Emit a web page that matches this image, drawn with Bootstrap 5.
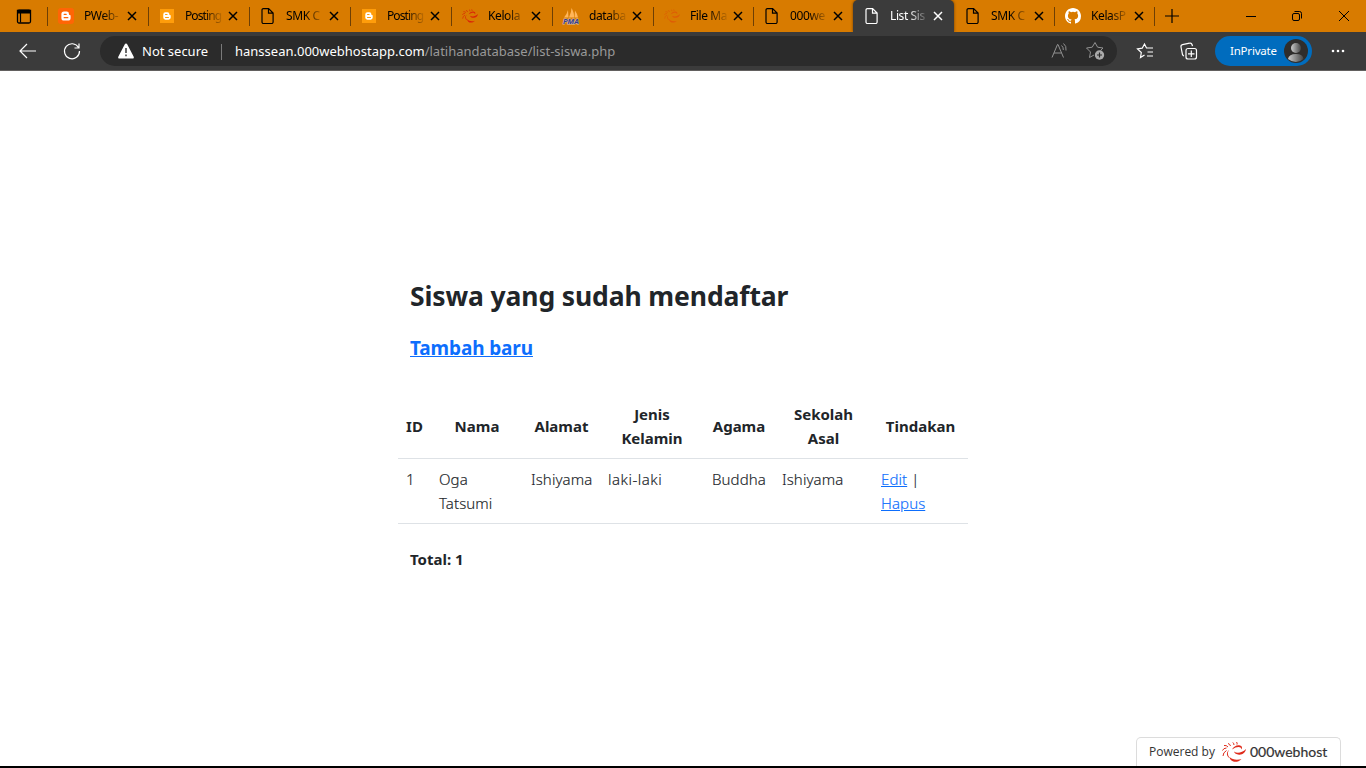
<!DOCTYPE html>
<html lang="id">
<head>
<meta charset="utf-8">
<title>List Siswa</title>
<link rel="stylesheet" href="https://cdn.jsdelivr.net/npm/bootstrap@5.3.0/dist/css/bootstrap.min.css">
<style>
body{width:1366px;height:768px;overflow:hidden;font-family:"Noto Sans","Open Sans",sans-serif;background:#fff}
svg{display:block;flex:none;overflow:visible}
.tabs{height:32px;background:#d87b00;color:#000;font-size:12px;flex:none}
.work{width:47px;padding-left:16px;flex:none}
.tb{width:101px;flex:none;padding:0 0 0 11px;height:32px;position:relative}
.tb:not(.on):not(.after)::before{content:"";position:absolute;left:0;top:7px;width:1px;height:19px;background:#6d3f05}
.tb.w100{width:100px}
.tb.plus{width:40px}
.tb.on{background:#3b3b3b;color:#fff;border-radius:5px 5px 0 0;box-shadow:0 0 3px #6b3d00}
.ttl{width:37px;margin-left:10px;overflow:hidden;white-space:nowrap;letter-spacing:-.4px;line-height:18px;-webkit-mask-image:linear-gradient(90deg,#000 50%,transparent 105%);mask-image:linear-gradient(90deg,#000 50%,transparent 105%)}
.ttl.tight{letter-spacing:-.9px}
.tb .x{margin-left:6px}
.bar{height:39px;background:#3b3b3b;border-bottom:1px solid #62605f;color:#fff;flex:none;position:relative;z-index:2}
.go{margin-left:19px}
.url{width:1017px;height:30px;background:#2b2b2b;border-radius:15px;font-size:13px;padding-left:18px;white-space:nowrap}
.url span{position:relative;top:.5px}
.sep{width:1px;height:16px;background:#7a7a7a;margin:0 13px 0 12px}
.secure{width:67px;margin-left:8px}
.path{color:#999}
.priv{width:97px;height:30px;border-radius:15px;background:#006cbe;font-size:11.5px;letter-spacing:-.2px;padding-left:15px;margin-left:18px}
.page-area{width:570px;margin-left:398px;padding-top:208px;color:#212529}
h1{font-size:26.5px;line-height:34px;font-weight:700;letter-spacing:-.12px;margin:0 0 23px 12px;white-space:nowrap}
.add{font-size:19px;line-height:24px;font-weight:700;letter-spacing:-.12px;margin:0 0 34px 12px}
a{color:#0d6efd}
.siswa{table-layout:fixed;width:570px;margin-bottom:23px;--bs-table-color:#212529}
.siswa th{font-size:15px;line-height:24px;text-align:center;vertical-align:middle;white-space:nowrap}
.siswa td{font-size:15px;line-height:24px;font-weight:350;letter-spacing:.08px;white-space:nowrap;-webkit-text-stroke:.15px currentColor}
.siswa .gender{letter-spacing:.5px}
.total{font-size:15px;line-height:24px;font-weight:700;margin-left:12px}
.edge{height:2px;background:#000;flex:none}
.host{width:205px;height:29px;margin-left:1136px;border:1px solid #dcdcdc;border-bottom:0;border-radius:5px 5px 0 0;font-size:12px;padding-left:12px;color:#333;font-family:"Open Sans",sans-serif;white-space:nowrap}
.host svg{margin:0 4px 0 7px}
.brand-name{font-size:14px;line-height:18px;font-family:Lato,sans-serif;margin-bottom:1px;-webkit-text-stroke:.2px #333}
</style>
<script src="https://cdn.jsdelivr.net/npm/bootstrap@5.3.0/dist/js/bootstrap.bundle.min.js"></script>
</head>
<body class="d-flex flex-column">
<svg width="0" height="0" class="position-absolute">
<defs>
<symbol id="x" viewBox="0 0 10 10"><path d="M1 1l8 8M9 1L1 9" stroke="currentColor" stroke-width="1.5"/></symbol>
<symbol id="doc" viewBox="0 0 16 16"><path d="M3.400.6h5.200l4.500 4.500v9a1.400 1.400 0 0 1-1.400 1.400H3.400A1.400 1.400 0 0 1 2 14.100V2A1.400 1.400 0 0 1 3.400.6zM8.500.7v4.500h4.500" fill="none" stroke="currentColor" stroke-width="1.200"/></symbol>
<symbol id="blog" viewBox="0 0 16 16"><path d="M6 3.500h2.600A2.400 2.400 0 0 1 11 5.900c0 .8.300 1 .9 1 .5 0 .7.300.7.800v2.200a2.600 2.600 0 0 1-2.600 2.600H6a2.600 2.600 0 0 1-2.600-2.600V6.100A2.600 2.600 0 0 1 6 3.500z" fill="#fff"/></symbol>
<symbol id="swirl" viewBox="0 0 24 20"><g fill="currentColor"><path d="M12 9.500c3 2.200 8 1.500 12-2.500-.5 3.500-3.500 6-7 5.700-2.800-.2-4.500-1.500-5-3.200z"/><path d="M7.500 15c3 2.800 7.500 3.500 12 2-3 3.300-7.500 3.700-10 1.500-1.200-1-1.800-2-2-3.500z"/><path d="M7 8c-1.800 2.500-1.500 5.500.8 8C4.500 14.800 3.800 10.500 7 8z"/><path d="M10 7.500c1.500-3 5-4.800 8-4 2 .5 2.600 2 1.500 4-.2-1.700-1.300-2.500-3-2.500-2 0-4 .8-6.500 2.500z"/></g><g fill="none" stroke="currentColor" stroke-width="1"><path d="M4.500 8.500Q1 10.500 1 14M4.500 6Q1.500 6 .5 8.500M6 5Q4.500 3 2 3.500M8.500 4Q8 2 6 1.500M12 3Q12 1 10.500.2M15 2.500Q15.500 1 14.500 0"/></g></symbol>
</defs></svg>

<header class="tabs d-flex align-items-center">
<div class="work"><svg width="16" height="16"><path d="M1.500 2.500h13v11a1.500 1.500 0 0 1-1.500 1.500H3a1.500 1.500 0 0 1-1.500-1.500z" fill="none" stroke="#000" stroke-width="1.300"/><path d="M1 3.500a2 2 0 0 1 2-2h10a2 2 0 0 1 2 2V5.500H1z" fill="#000"/><path d="M4.500 5v9.500" stroke="#000" stroke-width="1.200"/></svg></div>
<div class="tb d-flex align-items-center"><svg width="16" height="16"><rect width="16" height="16" rx="3" fill="#ff6505"/><use href="#blog"/><path d="M6.200 6.300h2M6.200 9.700h3.600" stroke="#ff6505" stroke-width="1.300" stroke-linecap="round"/></svg><span class="ttl">PWeb-</span><svg class="x" width="10" height="10"><use href="#x"/></svg></div>
<div class="tb d-flex align-items-center"><svg width="16" height="16"><rect x="1" y="1" width="14" height="14" fill="#ff9d0b"/><g transform="translate(1.500 1.500) scale(.81)"><use href="#blog" width="16" height="16"/></g><path d="M6.500 6.500h1.600M6.500 9.500h3" stroke="#ff9d0b" stroke-linecap="round"/></svg><span class="ttl tight">Posting</span><svg class="x" width="10" height="10"><use href="#x"/></svg></div>
<div class="tb d-flex align-items-center"><svg width="16" height="16"><use href="#doc"/></svg><span class="ttl">SMK C</span><svg class="x" width="10" height="10"><use href="#x"/></svg></div>
<div class="tb d-flex align-items-center"><svg width="16" height="16"><rect x="1" y="1" width="14" height="14" fill="#ff9d0b"/><g transform="translate(1.500 1.500) scale(.81)"><use href="#blog" width="16" height="16"/></g><path d="M6.500 6.500h1.600M6.500 9.500h3" stroke="#ff9d0b" stroke-linecap="round"/></svg><span class="ttl tight">Posting</span><svg class="x" width="10" height="10"><use href="#x"/></svg></div>
<div class="tb d-flex align-items-center"><svg width="16" height="16" color="#da2408"><use href="#swirl"/></svg><span class="ttl">Kelola</span><svg class="x" width="10" height="10"><use href="#x"/></svg></div>
<div class="tb d-flex align-items-center"><svg width="16" height="16"><path d="M1 9.500Q4 6 5 2L5.500 9.500zM6 9.500Q8.500 4 8.500 0q3 5 2.500 9.500zM11.500 9.500l.5-7Q14.500 6 15 9.500z" fill="#ffb65a"/><text x="0" y="15.800" font-size="7" font-weight="700" font-style="italic" textLength="16" lengthAdjust="spacingAndGlyphs" fill="#383c8c" stroke="#d7bfa5" stroke-width="1" paint-order="stroke">PMA</text></svg><span class="ttl">databa</span><svg class="x" width="10" height="10"><use href="#x"/></svg></div>
<div class="tb w100 d-flex align-items-center"><svg width="16" height="16" color="#e05108" opacity=".75"><use href="#swirl"/></svg><span class="ttl">File Ma</span><svg class="x" width="10" height="10"><use href="#x"/></svg></div>
<div class="tb w100 d-flex align-items-center"><svg width="16" height="16"><use href="#doc"/></svg><span class="ttl">000we</span><svg class="x" width="10" height="10"><use href="#x"/></svg></div>
<div class="tb on d-flex align-items-center"><svg width="16" height="16"><use href="#doc"/></svg><span class="ttl">List Sis</span><svg class="x" width="10" height="10"><use href="#x"/></svg></div>
<div class="tb w100 after d-flex align-items-center"><svg width="16" height="16"><use href="#doc"/></svg><span class="ttl">SMK C</span><svg class="x" width="10" height="10"><use href="#x"/></svg></div>
<div class="tb w100 d-flex align-items-center"><svg width="16" height="16"><path fill="#fff" d="M8 0C3.580 0 0 3.580 0 8c0 3.540 2.290 6.530 5.470 7.590.4.070.55-.17.55-.38 0-.19-.01-.82-.01-1.490-2.010.37-2.530-.49-2.690-.94-.09-.23-.48-.94-.82-1.130-.28-.15-.68-.52-.01-.53.63-.01 1.080.58 1.230.82.72 1.210 1.870.87 2.330.66.070-.52.28-.87.51-1.070-1.780-.2-3.640-.89-3.640-3.950 0-.87.31-1.590.82-2.150-.08-.2-.36-1.020.08-2.120 0 0 .67-.21 2.200.82a7.600 7.600 0 0 1 4 0c1.530-1.040 2.200-.82 2.200-.82.44 1.100.16 1.920.08 2.120.51.56.82 1.270.82 2.150 0 3.070-1.870 3.750-3.650 3.950.29.25.54.73.54 1.480 0 1.070-.01 1.930-.01 2.200 0 .21.15.46.55.38A8 8 0 0 0 16 8c0-4.420-3.580-8-8-8z"/></svg><span class="ttl">KelasP</span><svg class="x" width="10" height="10"><use href="#x"/></svg></div>
<div class="tb plus d-flex align-items-center"><svg width="14" height="14"><path d="M7 0v14M0 7h14" stroke="#000" stroke-width="1.200"/></svg></div>
<svg class="ms-auto" width="103" height="12" fill="none" stroke="#000" style="margin-right:17px"><path d="M0 6.500h10M93 1l10 10M103 1L93 11"/><rect x="46.500" y="3.500" width="7" height="7" rx="1.500"/><path d="M48.500 1.500h5a2 2 0 0 1 2 2v5"/></svg>
</header>

<nav class="bar d-flex align-items-center">
<svg class="go" width="81" height="18" fill="none" stroke="#fff" stroke-width="1.200"><path d="M17 9H1.500M8 2L1 9l7 7"/><path d="M59.500 5.500A7.500 7.500 0 1 0 60.500 9M60 1.500v4.500h-4.500"/></svg>
<div class="url d-flex align-items-center">
<svg width="16" height="16"><path d="M8 0.500a1.300 1.300 0 0 1 1.200.7l6.500 12.500c.4.900 0 1.800-1 1.800H1.300c-1 0-1.400-.9-1-1.800L6.800 1.200A1.300 1.300 0 0 1 8 .5z" fill="#fff"/><path d="M8 5v5M8 11.500v1.700" stroke="#2b2b2b" stroke-width="1.400"/></svg>
<span class="secure">Not secure</span><span class="sep"></span>
<span>hanssean.000webhostapp.com</span><span class="path">/latihandatabase/list-siswa.php</span>
<svg class="ms-auto" width="54" height="18" fill="none" stroke="#929292" style="margin-right:12px"><path d="M1 15.500L6.500 2.500h.5L12.500 15.500M3 11h7.500M10.500 3.500q2 1.500 1.800 4.500M12.500 1.500q3.200 2.500 2.500 7"/><path d="M43 13l-4.500 2.500 1-5.500-4-4 5.700-.8L44 .5l2.600 4.700 5.400.8-2.500 2.500"/><circle cx="48.500" cy="13" r="4.700" fill="#aaa" stroke="none"/><path d="M46 13h5M48.500 10.500v5" stroke="#2b2b2b" stroke-width="1.200"/></svg>
</div>
<svg width="61" height="18" fill="none" stroke="#fff" stroke-width="1.200" style="margin-left:19px"><path d="M8.500 13l-4 2.500.8-5L1.500 7l4.700-.8L8.500 2l2 4H17M11.500 10H17M11 14h6"/><rect x="50" y="6.500" width="10.500" height="10.500" rx="2"/><path d="M55.300 8.500v6.500M52 11.800h6.500M48 14q-1-.3-1.500-1.500L45 5a2 2 0 0 1 1.500-2.300l7-1.500A2 2 0 0 1 56 2.500l.5 1.700"/></svg>
<div class="priv d-flex align-items-center"><span>InPrivate</span><svg width="24" height="24" class="ms-auto" style="margin-right:4px"><defs><linearGradient id="pg"><stop stop-color="#ccc"/><stop offset="1" stop-color="#444"/></linearGradient></defs><circle cx="12" cy="12" r="12" fill="#2f2d2c"/><circle cx="12" cy="9" r="5" fill="url(#pg)"/><path d="M4 20q1-5 8-5t7.500 5q-7.500 6-15.500 0z" fill="url(#pg)"/></svg></div>
<svg width="14" height="4" fill="#fff" style="margin-left:19px"><circle cx="2" cy="2" r="1.300"/><circle cx="7" cy="2" r="1.300"/><circle cx="12" cy="2" r="1.300"/></svg>
</nav>

<main class="flex-grow-1">
<div class="page-area">
<h1>Siswa yang sudah mendaftar</h1>
<div class="add"><a href="#">Tambah baru</a></div>
<table class="table siswa">
<colgroup><col style="width:33px"><col style="width:92px"><col style="width:77px"><col style="width:104px"><col style="width:70px"><col style="width:99px"><col style="width:95px"></colgroup>
<thead><tr><th>ID</th><th>Nama</th><th>Alamat</th><th>Jenis<br>Kelamin</th><th>Agama</th><th>Sekolah<br>Asal</th><th>Tindakan</th></tr></thead>
<tbody><tr><td>1</td><td>Oga<br>Tatsumi</td><td>Ishiyama</td><td class="gender">laki-laki</td><td>Buddha</td><td>Ishiyama</td><td><a href="#">Edit</a> |<br><a href="#">Hapus</a></td></tr></tbody>
</table>
<div class="total">Total: 1</div>
</div>
</main>
<footer class="host d-flex align-items-center flex-shrink-0"><span>Powered by</span><svg width="24" height="20" color="#df2b1b"><use href="#swirl"/></svg><span class="brand-name">000webhost</span></footer>
<div class="edge"></div>
</body>
</html>
